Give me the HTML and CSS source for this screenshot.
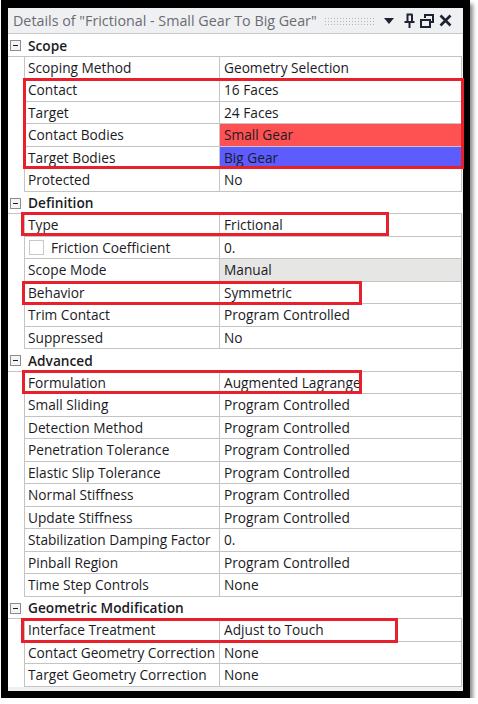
FILE: index.html
```html
<!DOCTYPE html>
<html lang="en">
<head>
  <meta charset="UTF-8" />
  <title>Details of Frictional contact</title>
  <link rel="stylesheet" href="styles.css">
</head>
<body>
  <div class="window">
    <div class="titlebar">
      <span class="title">Details of "Frictional - Small Gear To Big Gear"</span>
      <span class="grip"></span>
      <span class="tools">
        <svg width="12" height="8" viewBox="0 0 12 8"><path d="M1 1h10L6 7z" fill="#1e2233"/></svg>
        <svg class="pin" width="11" height="16" viewBox="0 0 11 16"><path d="M2.5 1.5h6M3.5 1.5v7M8 1.5v7M0.5 9h10M5.5 9v6" stroke="#1e2233" stroke-width="2" fill="none"/></svg>
        <svg width="14" height="14" viewBox="0 0 14 14"><path d="M5 4V1h8v7h-3M1 6h9v7H1z" stroke="#1e2233" stroke-width="2" fill="none"/></svg>
        <svg width="13" height="13" viewBox="0 0 13 13"><path d="M1.5 1.5l10 10M11.5 1.5l-10 10" stroke="#1e2233" stroke-width="2.6" fill="none"/></svg>
      </span>
    </div>

    <div class="grid">
      <div class="head"><span class="toggle"></span>Scope</div>
      <div class="row"><div class="name">Scoping Method</div><div class="value">Geometry Selection</div></div>
      <div class="row"><div class="name">Contact</div><div class="value">16 Faces</div></div>
      <div class="row"><div class="name">Target</div><div class="value">24 Faces</div></div>
      <div class="row"><div class="name">Contact Bodies</div><div class="value red">Small Gear</div></div>
      <div class="row"><div class="name">Target Bodies</div><div class="value blue">Big Gear</div></div>
      <div class="row"><div class="name">Protected</div><div class="value">No</div></div>

      <div class="head"><span class="toggle"></span>Definition</div>
      <div class="row"><div class="name">Type</div><div class="value">Frictional</div></div>
      <div class="row"><div class="name check"><span class="box"></span>Friction Coefficient</div><div class="value">0.</div></div>
      <div class="row"><div class="name">Scope Mode</div><div class="value grey">Manual</div></div>
      <div class="row"><div class="name">Behavior</div><div class="value">Symmetric</div></div>
      <div class="row"><div class="name">Trim Contact</div><div class="value">Program Controlled</div></div>
      <div class="row"><div class="name">Suppressed</div><div class="value">No</div></div>

      <div class="head"><span class="toggle"></span>Advanced</div>
      <div class="row"><div class="name">Formulation</div><div class="value">Augmented Lagrange</div></div>
      <div class="row"><div class="name">Small Sliding</div><div class="value">Program Controlled</div></div>
      <div class="row"><div class="name">Detection Method</div><div class="value">Program Controlled</div></div>
      <div class="row"><div class="name">Penetration Tolerance</div><div class="value">Program Controlled</div></div>
      <div class="row"><div class="name">Elastic Slip Tolerance</div><div class="value">Program Controlled</div></div>
      <div class="row"><div class="name">Normal Stiffness</div><div class="value">Program Controlled</div></div>
      <div class="row"><div class="name">Update Stiffness</div><div class="value">Program Controlled</div></div>
      <div class="row"><div class="name">Stabilization Damping Factor</div><div class="value">0.</div></div>
      <div class="row"><div class="name">Pinball Region</div><div class="value">Program Controlled</div></div>
      <div class="row"><div class="name">Time Step Controls</div><div class="value">None</div></div>

      <div class="head"><span class="toggle"></span>Geometric Modification</div>
      <div class="row"><div class="name">Interface Treatment</div><div class="value">Adjust to Touch</div></div>
      <div class="row"><div class="name">Contact Geometry Correction</div><div class="value">None</div></div>
      <div class="row"><div class="name">Target Geometry Correction</div><div class="value">None</div></div>

      <!-- red annotation boxes -->
      <div class="mark mark-bodies"></div>
      <div class="mark mark-type"></div>
      <div class="mark mark-behavior"></div>
      <div class="mark mark-formulation"></div>
      <div class="mark mark-interface"></div>
    </div>
  </div>
</body>
</html>
```

FILE: styles.css
```css
body {
  margin: 0;
  background: white;
  font-family: 'Open Sans', 'Noto Sans', sans-serif;
  color: #1b1b24;
}
.window {
  margin: 0 0 0 1px;
  width: 455px;
  border: 7px solid black;
  border-top-width: 8px;
  background: #f0f0f0;
  padding-bottom: 4px;
  box-shadow: 3px 4px 4px rgba(0, 0, 0, 0.45);
}
.titlebar {
  height: 25px;
  display: flex;
  align-items: center;
  padding-left: 5px;
  border-bottom: 1px solid #c8c8c8;
  background: #eff0f2;
}
.title {
  color: #6b6b72;
  font-size: 14.3px;
  white-space: nowrap;
}
.grip {
  width: 52px;
  height: 8px;
  margin-left: 7px;
  background-image: radial-gradient(#b4b4b8 35%, transparent 40%);
  background-size: 3px 3px;
}
.tools {
  display: flex;
  align-items: center;
  gap: 5px;
  margin-left: 7px;
}
.tools .pin {
  margin-left: 4px;
}
.grid {
  position: relative;
  background: white;
  margin-right: 1px;
  font-size: 13.7px;
}
.head, .row {
  height: 22.5px;
  box-sizing: border-box;
  display: flex;
  align-items: center;
}
.head {
  position: relative;
  font-weight: 600;
  padding-left: 20px;
  box-shadow: inset 0 -1px 0 #c4c4c4;
}
.toggle {
  position: absolute;
  left: 2px;
  top: 6px;
  width: 9px;
  height: 9px;
  border: 1px solid #8c8c8c;
  background: linear-gradient(#1b1b24, #1b1b24) center / 5px 1px no-repeat, #f4f4f4;
}
.row {
  margin-left: 16px;
  border-left: 1px solid #c4c4c4;
  border-right: 1px solid #c4c4c4;
  border-bottom: 1px solid #c4c4c4;
}
.name {
  width: 195px;
  flex: none;
  align-self: stretch;
  display: flex;
  align-items: center;
  padding-left: 3px;
  box-sizing: border-box;
  border-right: 1px solid #c4c4c4;
  white-space: nowrap;
}
.value {
  flex: 1;
  align-self: stretch;
  display: flex;
  align-items: center;
  padding-left: 4px;
  white-space: nowrap;
}
.check {
  padding-left: 4px;
}
.box {
  width: 13px;
  height: 13px;
  border: 1px solid #c8c8c8;
  background: white;
  margin-right: 7px;
}
.red { background: #fe5252; }
.blue { background: #5c5cff; }
.grey { background: #e6e6e4; }

.mark {
  position: absolute;
  border: 3px solid #e8202c;
  box-sizing: border-box;
}
.mark-bodies { left: 15px; top: 44px; width: 441px; height: 91px; }
.mark-type { left: 13px; top: 178px; width: 368px; height: 24px; }
.mark-behavior { left: 14px; top: 247px; width: 340px; height: 24px; }
.mark-formulation { left: 14px; top: 336px; width: 340px; height: 24px; }
.mark-interface { left: 13px; top: 584px; width: 377px; height: 25px; }
```
